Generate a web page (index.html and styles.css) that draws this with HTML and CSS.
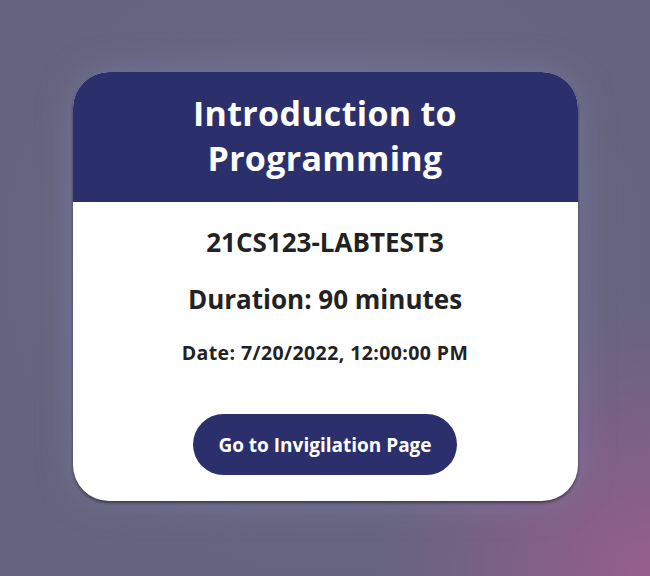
FILE: index.html
```html
<!DOCTYPE html>
<html lang="en">
<head>
<meta charset="utf-8">
<title>Exam</title>
<link rel="stylesheet" href="styles.css">
</head>
<body>
<main class="page">
  <section class="card">
    <header class="card-header">
      <h1 class="card-title">Introduction to Programming</h1>
    </header>
    <div class="card-body">
      <h2 class="code">21CS123-LABTEST3</h2>
      <h2 class="duration">Duration: 90 minutes</h2>
      <p class="date">Date: 7/20/2022, 12:00:00 PM</p>
      <button class="btn" type="button">Go to Invigilation Page</button>
    </div>
  </section>
</main>
</body>
</html>
```

FILE: styles.css
```css
* { box-sizing: border-box; }
html, body { margin: 0; padding: 0; height: 100%; }
body {
  font-family: "Open Sans", "Noto Sans", sans-serif;
  background-color: #64647e;
  background-image:
    radial-gradient(circle at 100% 100%, rgba(150, 94, 140, 1) 0, rgba(150, 94, 140, 0) 280px),
    radial-gradient(ellipse at 50% 45%, rgba(118, 116, 150, 0.6) 0, rgba(118, 116, 150, 0) 70%);
}
.page {
  height: 576px;
  display: flex;
  align-items: center;
  justify-content: center;
  padding-bottom: 3px;
}
.card {
  width: 505px;
  background: #fff;
  border-radius: 36px;
  overflow: hidden;
  box-shadow: 0 2px 3px rgba(0, 0, 0, 0.45), 0 0 36px rgba(135, 135, 185, 0.45);
}
.card-header {
  background: #2b2f6b;
  padding: 19px 20px 21px;
  text-align: center;
}
.card-title {
  margin: 0 auto;
  max-width: 320px;
  color: #fff;
  font-size: 34px;
  font-weight: 700;
  line-height: 45px;
  letter-spacing: 0.3px;
}
.card-body {
  display: flex;
  flex-direction: column;
  align-items: center;
  padding: 22px 20px 26px;
  color: #222;
  text-align: center;
}
.code, .duration {
  margin: 0;
  font-size: 26px;
  font-weight: 700;
  line-height: normal;
}
.duration { margin-top: 21px; }
.date {
  margin: 23px 0 0;
  font-size: 19.5px;
  font-weight: 700;
  line-height: 26px;
  letter-spacing: 0.4px;
}
.btn {
  margin-top: 48px;
  height: 61px;
  padding: 0 25px;
  border: none;
  border-radius: 31px;
  background: #2b2f6b;
  color: #fff;
  font-family: "Open Sans", "Noto Sans", sans-serif;
  font-size: 19px;
  font-weight: 700;
  cursor: pointer;
}
```
